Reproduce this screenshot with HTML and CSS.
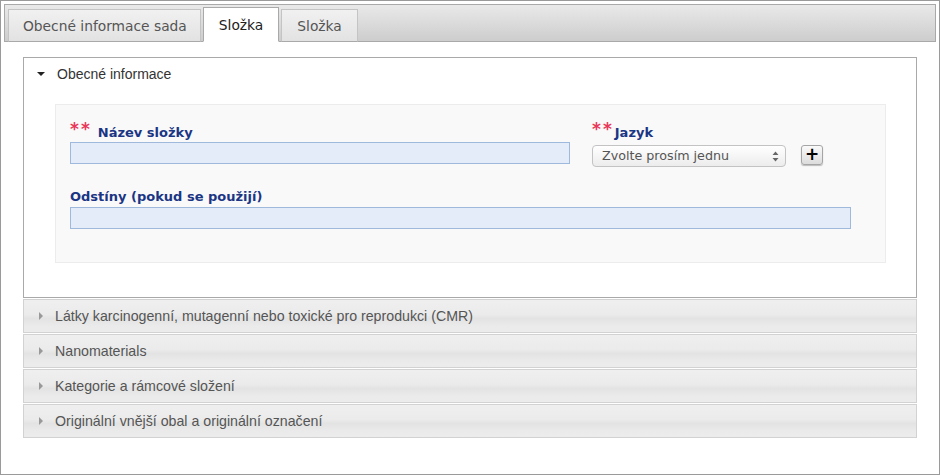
FILE: index.html
```html
<!DOCTYPE html>
<html>
<head>
<meta charset="utf-8">
<link rel="stylesheet" href="styles.css">
</head>
<body>
<div class="frame">
  <div class="tabbar">
    <div class="tab">Obecné informace sada</div>
    <div class="tab active">Složka</div>
    <div class="tab">Složka</div>
  </div>
  <div class="content">
    <div class="panel">
      <div class="panel-head"><span class="tri-down"></span>Obecné informace</div>
      <div class="panel-body">
        <div class="formbox">
          <div class="row">
            <div class="field name-field">
              <div class="label"><span class="req">**</span>Název složky</div>
              <div class="input"></div>
            </div>
            <div class="field lang-field">
              <div class="label"><span class="req tight">**</span>Jazyk</div>
              <div class="lang-controls">
                <div class="select">Zvolte prosím jednu
                  <svg class="updown" width="7" height="11" viewBox="0 0 7 11"><path d="M3.5 0.5 L6.5 4 L0.5 4 Z M3.5 10.5 L6.5 7 L0.5 7 Z" fill="#666"/></svg>
                </div>
                <div class="plus">+</div>
              </div>
            </div>
          </div>
          <div class="row row2">
            <div class="field wide-field">
              <div class="label">Odstíny (pokud se použijí)</div>
              <div class="input"></div>
            </div>
          </div>
        </div>
      </div>
    </div>
    <div class="acc"><span class="tri-right"></span>Látky karcinogenní, mutagenní nebo toxické pro reprodukci (CMR)</div>
    <div class="acc"><span class="tri-right"></span>Nanomaterials</div>
    <div class="acc"><span class="tri-right"></span>Kategorie a rámcové složení</div>
    <div class="acc"><span class="tri-right"></span>Originální vnější obal a originální označení</div>
  </div>
</div>
</body>
</html>
```
FILE: styles.css
```css
* { box-sizing: border-box; }
html, body { margin: 0; padding: 0; background: #fff; }
.frame {
  width: 940px;
  height: 475px;
  border: 1px solid #9a9a9a;
  padding: 3px 3px 0 3px;
  font-family: "Liberation Sans", Arial, sans-serif;
}
.tabbar {
  height: 38px;
  border: 1px solid #a9a9a9;
  background: linear-gradient(#e9e9e9, #cdcdcd);
  display: flex;
  align-items: flex-end;
  padding-left: 3px;
  gap: 2px;
}
.tab {
  height: 33px;
  margin-bottom: -1px;
  border: 1px solid #c4c4c4;
  border-bottom: 1px solid #a9a9a9;
  background: linear-gradient(#f1f1f1, #e2e2e2);
  font-family: "DejaVu Sans", Verdana, sans-serif;
  font-size: 13.8px;
  color: #555;
  padding: 0 15px;
  line-height: 32px;
}
.tab:first-child { padding: 0 13px 0 14px; }
.tab.active {
  height: 35px;
  background: #fff;
  border-color: #a9a9a9;
  border-bottom-color: #fff;
  color: #222;
  line-height: 34px;
  padding: 0 15px;
}
.content {
  padding: 15px 19px 0 19px;
}
.panel {
  border: 1px solid #a9a9a9;
  background: #fff;
}
.panel-head {
  height: 32px;
  display: flex;
  align-items: center;
  font-size: 14px;
  color: #333;
  padding-left: 12px;
}
.tri-down {
  width: 0; height: 0;
  border-left: 4px solid transparent;
  border-right: 4px solid transparent;
  border-top: 4px solid #222;
  margin-right: 12px;
  margin-left: 1px;
}
.panel-body {
  padding: 14px 30px 34px 31px;
}
.formbox {
  background: #f9f9f9;
  border: 1px solid #ececec;
  height: 159px;
  padding: 16px 14px 0 14px;
  font-family: "DejaVu Sans", Verdana, sans-serif;
}
.row { display: flex; }
.row2 { margin-top: 19px; }
.label {
  font-weight: bold;
  font-size: 13px;
  color: #1b3585;
  height: 21px;
  line-height: 21px;
  white-space: nowrap;
}
.req {
  color: #e8375a;
  font-size: 17px;
  letter-spacing: 2px;
  margin-right: 6px;
  position: relative;
  top: -2px;
}
.req.tight { margin-right: 1px; margin-left: 0; }
.input {
  height: 22px;
  background: #e3ecf8;
  border: 1px solid #9fb9dc;
}
.name-field { width: 500px; }
.lang-field { margin-left: 22px; }
.lang-controls { display: flex; align-items: flex-start; margin-top: 3px; }
.select {
  width: 194px;
  height: 22px;
  border: 1px solid #c3c3c3;
  border-radius: 4px;
  background: linear-gradient(#ffffff, #ececec);
  font-size: 12.7px;
  color: #555;
  line-height: 20px;
  padding-left: 9px;
  display: flex;
  justify-content: space-between;
  align-items: center;
  padding-right: 6px;
}
.updown { flex: none; }
.plus {
  margin-left: 15px;
  width: 22px;
  height: 20px;
  border: 1px solid #a5a5a5;
  border-radius: 3px;
  background: linear-gradient(#fafafa, #dcdcdc);
  box-shadow: 0 1px 1px #bbb;
  font-family: "DejaVu Sans", sans-serif;
  font-weight: bold;
  font-size: 17px;
  line-height: 17px;
  text-align: center;
  color: #000;
}
.wide-field { width: 781px; }
.acc {
  margin-top: 1px;
  height: 34px;
  border: 1px solid #d2d2d2;
  background: linear-gradient(#efefef 0%, #ebebeb 45%, #e3e3e3 58%, #eaeaea 80%, #ececec 100%);
  display: flex;
  align-items: center;
  font-size: 14.2px;
  color: #555;
  padding-left: 15px;
}
.tri-right {
  width: 0; height: 0;
  border-top: 4px solid transparent;
  border-bottom: 4px solid transparent;
  border-left: 4px solid #999;
  margin-right: 12px;
}
```
